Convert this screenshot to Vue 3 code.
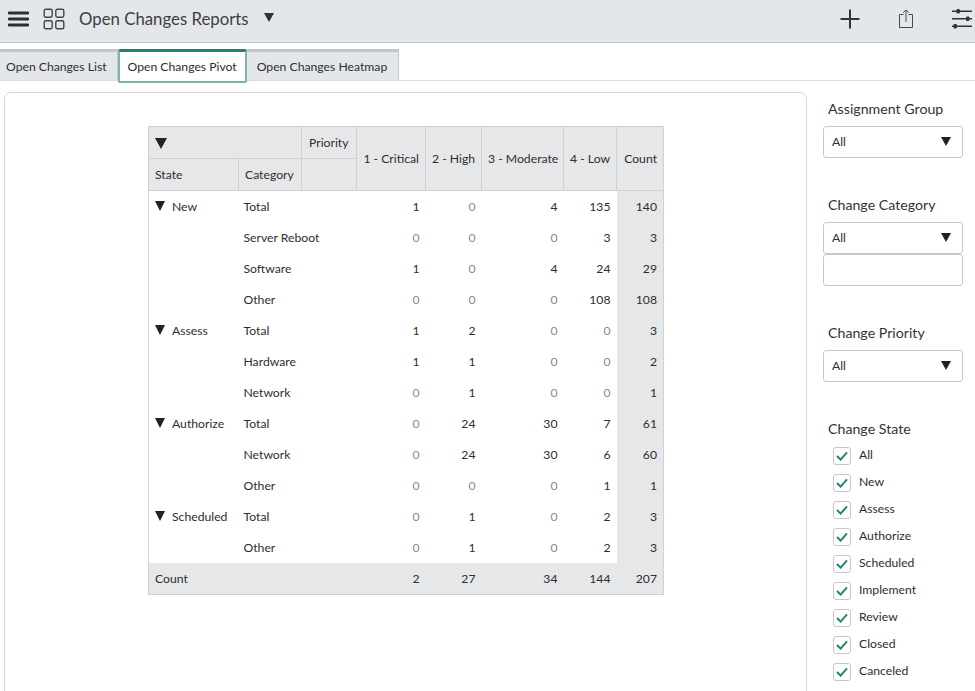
<template>
  <div class="page">
    <header class="topbar">
      <svg class="icon menu" width="21" height="16" viewBox="0 0 21 16">
        <path d="M1 2h19M1 8h19M1 14h19" stroke="#2e2e2e" stroke-width="2.8" stroke-linecap="round" fill="none" />
      </svg>
      <svg class="icon grid" width="22" height="22" viewBox="0 0 22 22" fill="none" stroke="#444" stroke-width="1.4">
        <rect x="1.2" y="1.2" width="8" height="8" rx="1.6" />
        <rect x="12.8" y="1.2" width="8" height="8" rx="1.6" />
        <rect x="1.2" y="12.8" width="8" height="8" rx="1.6" />
        <rect x="12.8" y="12.8" width="8" height="8" rx="1.6" />
      </svg>
      <span class="title">Open Changes Reports</span>
      <span class="title-caret"></span>
      <div class="actions">
        <svg width="20" height="20" viewBox="0 0 20 20">
          <path d="M10 0.5v19M0.5 10h19" stroke="#333" stroke-width="2" fill="none" />
        </svg>
        <svg class="share" width="16" height="19" viewBox="0 0 16 19" fill="none" stroke="#4a4a4a" stroke-width="1">
          <path d="M5.5 5.5H1.5v13h13v-13h-4" />
          <path d="M8 13V1M5.2 3.6L8 .9l2.8 2.7" />
        </svg>
        <svg width="20" height="20" viewBox="0 0 20 20" fill="#333" stroke="none">
          <path d="M0 2.2h20M0 9.7h20M0 17.2h20" stroke="#333" stroke-width="1.4" fill="none" />
          <rect x="4.5" y="0" width="3.4" height="4.6" rx="1" />
          <rect x="14" y="7.5" width="3.4" height="4.6" rx="1" />
          <rect x="1.5" y="15" width="3.4" height="4.6" rx="1" />
        </svg>
      </div>
    </header>

    <nav class="tabs">
      <div class="tab">Open Changes List</div>
      <div class="tab active">Open Changes Pivot</div>
      <div class="tab">Open Changes Heatmap</div>
    </nav>

    <main class="content">
      <section class="panel">
        <table class="pivot">
          <colgroup>
            <col v-for="w in colWidths" :key="w.id" :style="{ width: w.px + 'px' }" />
          </colgroup>
          <thead>
            <tr>
              <th colspan="2" class="left"><span class="caret big"></span></th>
              <th class="left priority">Priority</th>
              <th v-for="p in priorities" :key="p" rowspan="2" class="right">{{ p }}</th>
              <th rowspan="2" class="right">Count</th>
            </tr>
            <tr>
              <th class="left">State</th>
              <th class="left">Category</th>
              <th></th>
            </tr>
          </thead>
          <tbody>
            <tr v-for="(row, i) in rows" :key="i">
              <td class="state">
                <template v-if="row.state"><span class="caret"></span>{{ row.state }}</template>
              </td>
              <td colspan="2" class="cat">{{ row.cat }}</td>
              <td v-for="(n, j) in row.vals" :key="j" class="num" :class="{ zero: n === 0 }">{{ n }}</td>
              <td class="num total">{{ row.count }}</td>
            </tr>
          </tbody>
          <tfoot>
            <tr>
              <td colspan="3" class="foot-label">Count</td>
              <td v-for="n in footer" :key="n" class="num">{{ n }}</td>
            </tr>
          </tfoot>
        </table>
      </section>

      <aside class="filters">
        <div class="filter">
          <label>Assignment Group</label>
          <div class="select">All<span class="caret sel"></span></div>
        </div>
        <div class="filter">
          <label>Change Category</label>
          <div class="select">All<span class="caret sel"></span></div>
          <div class="textbox"></div>
        </div>
        <div class="filter">
          <label>Change Priority</label>
          <div class="select">All<span class="caret sel"></span></div>
        </div>
        <div class="filter">
          <label>Change State</label>
          <div class="checks">
            <div v-for="s in states" :key="s" class="check">
              <span class="box">
                <svg width="12" height="10" viewBox="0 0 12 10">
                  <path d="M1 5l3.6 3.6L11 1.4" stroke="#1f8476" stroke-width="2" fill="none" />
                </svg>
              </span>
              {{ s }}
            </div>
          </div>
        </div>
      </aside>
    </main>
  </div>
</template>

<script setup>
const colWidths = [
  { id: "state", px: 90 },
  { id: "cat", px: 63 },
  { id: "pri", px: 55 },
  { id: "c", px: 69 },
  { id: "h", px: 56 },
  { id: "m", px: 82 },
  { id: "l", px: 53 },
  { id: "n", px: 47 },
];

const priorities = ["1 - Critical", "2 - High", "3 - Moderate", "4 - Low"];

const rows = [
  { state: "New", cat: "Total", vals: [1, 0, 4, 135], count: 140 },
  { cat: "Server Reboot", vals: [0, 0, 0, 3], count: 3 },
  { cat: "Software", vals: [1, 0, 4, 24], count: 29 },
  { cat: "Other", vals: [0, 0, 0, 108], count: 108 },
  { state: "Assess", cat: "Total", vals: [1, 2, 0, 0], count: 3 },
  { cat: "Hardware", vals: [1, 1, 0, 0], count: 2 },
  { cat: "Network", vals: [0, 1, 0, 0], count: 1 },
  { state: "Authorize", cat: "Total", vals: [0, 24, 30, 7], count: 61 },
  { cat: "Network", vals: [0, 24, 30, 6], count: 60 },
  { cat: "Other", vals: [0, 0, 0, 1], count: 1 },
  { state: "Scheduled", cat: "Total", vals: [0, 1, 0, 2], count: 3 },
  { cat: "Other", vals: [0, 1, 0, 2], count: 3 },
];

const footer = [2, 27, 34, 144, 207];

const states = ["All", "New", "Assess", "Authorize", "Scheduled", "Implement", "Review", "Closed", "Canceled"];
</script>

<style>
html, body { margin: 0; background: #fff; }
</style>

<style scoped>
.page {
  width: 975px;
  height: 691px;
  overflow: hidden;
  font-family: "Lato", "Open Sans", sans-serif;
  font-size: 12.2px;
  color: #2e2e2e;
  background: #fff;
}

.topbar {
  height: 43px;
  box-sizing: border-box;
  display: flex;
  align-items: center;
  background: #e4e7ea;
  border-bottom: 1px solid #c4c7ca;
  padding: 0 3px 5px 8px;
}
.grid { margin-left: 14px; }
.title { margin-left: 14px; font-size: 16.8px; color: #3c3f42; }
.title-caret {
  margin-left: 15px;
  margin-bottom: 3px;
  border-left: 5px solid transparent;
  border-right: 5px solid transparent;
  border-top: 9px solid #333;
}
.actions { margin-left: auto; display: flex; align-items: center; gap: 38px; }

.tabs {
  height: 38px;
  box-sizing: border-box;
  display: flex;
  align-items: flex-end;
  border-bottom: 1px solid #dcdcdc;
}
.tab {
  height: 31px;
  box-sizing: border-box;
  padding: 7px 10px 0 6px;
  background: #e4e7ea;
  border-top: 3px solid #c6c6c6;
  border-right: 1px solid #c6c6c6;
  white-space: nowrap;
}
.tab.active {
  position: relative;
  height: 34px;
  margin: 0 0 -3px 0;
  padding: 7px 8px 0 8px;
  background: #fff;
  border: 2px solid #7cb5aa;
  border-top: 3px solid #1f8476;
  border-radius: 2px;
}
.tab:last-child { padding: 7px 11px 0 10px; }

.content { display: flex; align-items: flex-start; }
.panel {
  width: 803px;
  height: 640px;
  box-sizing: border-box;
  margin: 11px 0 0 4px;
  padding: 33px 0 0 143px;
  border: 1px solid #d8d8d8;
  border-radius: 7px;
}

.pivot {
  width: 516px;
  table-layout: fixed;
  border-collapse: collapse;
  border: 1px solid #cfd1d3;
}
.pivot th {
  height: 32px;
  box-sizing: border-box;
  padding: 0 6px;
  background: #e6e7e9;
  border: 1px solid #cfd1d3;
  font-weight: 400;
  white-space: nowrap;
}
.pivot .left { text-align: left; }
.pivot .priority { padding-left: 7px; }
.pivot .right { text-align: right; }
.pivot td { height: 31px; box-sizing: border-box; padding: 0 6px; white-space: nowrap; }
.pivot .state { padding-right: 0; }
.pivot .cat { padding-left: 5px; }
.pivot .num { text-align: right; }
.pivot .zero { color: #8a8a8a; }
.pivot .total { background: #e6e7e9; }
.pivot tfoot td { background: #e6e7e9; height: 32px; }

.caret {
  display: inline-block;
  margin-right: 7px;
  border-left: 5px solid transparent;
  border-right: 5px solid transparent;
  border-top: 10px solid #222;
}
.caret.big { margin: 4px 0 0; border-left-width: 6px; border-right-width: 6px; border-top-width: 11px; }
.caret.sel { margin: 0; border-top-width: 9px; }

.filters { margin-left: 16px; width: 140px; padding-top: 18px; }
.filter { margin-bottom: 37px; }
.filter label { display: block; padding-left: 5px; margin-bottom: 7px; font-size: 14.2px; line-height: 20px; color: #333; }
.select {
  height: 32px;
  box-sizing: border-box;
  display: flex;
  align-items: center;
  justify-content: space-between;
  padding: 0 11px 2px 8px;
  border: 1px solid #c8c8c8;
  border-radius: 3px;
}
.textbox {
  height: 32px;
  box-sizing: border-box;
  border: 1px solid #c8c8c8;
  border-radius: 3px;
}
.checks { margin-top: -5px; }
.check { display: flex; align-items: center; height: 27px; padding-left: 10px; }
.box {
  width: 18px;
  height: 18px;
  box-sizing: border-box;
  display: flex;
  align-items: center;
  justify-content: center;
  margin-right: 8px;
  margin-top: 2px;
  border: 1px solid #c8c8c8;
  border-radius: 3px;
}
</style>
